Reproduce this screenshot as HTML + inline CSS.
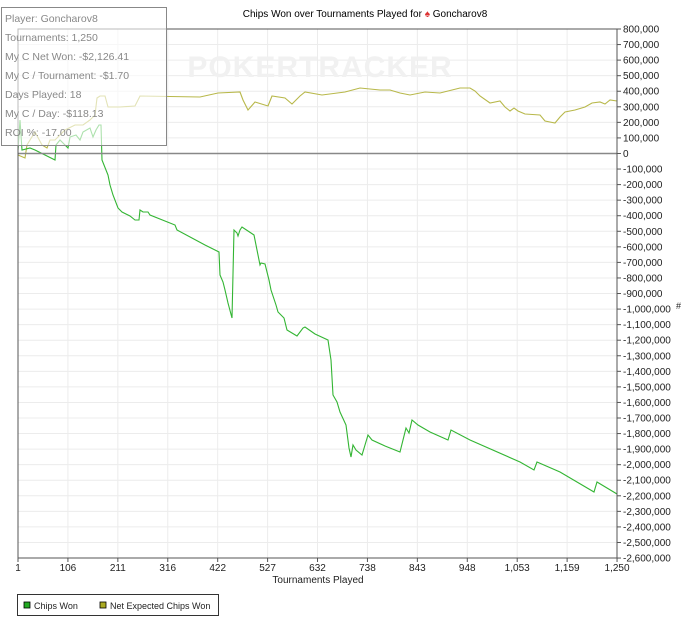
<!DOCTYPE html>
<html><head><meta charset="utf-8"><style>
html,body{margin:0;padding:0;background:#fff;width:700px;height:638px;overflow:hidden}
svg text{font-family:"Liberation Sans",sans-serif}
</style></head><body>
<svg width="700" height="638" viewBox="0 0 700 638" xmlns="http://www.w3.org/2000/svg">
<rect width="700" height="638" fill="#fff"/>
<text x="365" y="17" font-size="10" text-anchor="middle" fill="#000">Chips Won over Tournaments Played for <tspan fill="#d33">♠</tspan> Goncharov8</text>
<g stroke="#ececec" stroke-width="1" id="grid"></g>
<text x="320" y="77" font-size="30" font-weight="bold" fill="#f1f1f1" text-anchor="middle" letter-spacing="1">POKERTRACKER</text>
<g id="lines" fill="none" stroke-width="1.1"></g>
<line x1="18" y1="153.5" x2="617" y2="153.5" stroke="#888" stroke-width="1.5"/>
<rect x="18" y="29" width="599" height="529" fill="none" stroke="#555" stroke-width="1"/>
<g id="axis" font-size="10" fill="#222"></g>
<text x="318" y="583" font-size="10" text-anchor="middle" fill="#222">Tournaments Played</text>
<text x="676" y="309" font-size="9" fill="#222">#</text>
<rect x="17.5" y="594.5" width="201" height="21" fill="#fff" stroke="#333"/>
<rect x="24" y="602" width="6" height="6" fill="#2a2" stroke="#000" stroke-width="0.8"/>
<text x="34" y="609" font-size="9" fill="#222">Chips Won</text>
<rect x="100" y="602" width="6" height="6" fill="#aa2" stroke="#000" stroke-width="0.8"/>
<text x="110" y="609" font-size="9" fill="#222">Net Expected Chips Won</text>
<rect x="1.5" y="7.5" width="165" height="138" fill="rgba(255,255,255,0.6)" stroke="#888"/>
<g font-size="10.5" fill="#888">
<text x="5" y="22">Player: Goncharov8</text>
<text x="5" y="41">Tournaments: 1,250</text>
<text x="5" y="60">My C Net Won: -$2,126.41</text>
<text x="5" y="79">My C / Tournament: -$1.70</text>
<text x="5" y="98">Days Played: 18</text>
<text x="5" y="117">My C / Day: -$118.13</text>
<text x="5" y="136">ROI %: -17.00</text>
</g>
</svg>
<script>
var ns="http://www.w3.org/2000/svg";
function el(p,t,a,txt){var e=document.createElementNS(ns,t);for(var k in a)e.setAttribute(k,a[k]);if(txt)e.textContent=txt;p.appendChild(e);return e;}
var g=document.getElementById('grid'),ax=document.getElementById('axis'),ln=document.getElementById('lines');
var xl=["1","106","211","316","422","527","632","738","843","948","1,053","1,159","1,250"];
for(var i=0;i<13;i++){var x=18+i*49.92;el(g,'line',{x1:x,y1:29,x2:x,y2:558});el(ax,'line',{x1:x,y1:558,x2:x,y2:562,stroke:'#555'});
el(ax,'text',{x:x,y:571,'text-anchor':'middle'},xl[i]);}
for(var j=0;j<=34;j++){var y=29+j*15.56;el(g,'line',{x1:18,y1:y,x2:617,y2:y});el(ax,'line',{x1:617,y1:y,x2:621,y2:y,stroke:'#555'});
var v=800000-j*100000;var s=Math.abs(v).toLocaleString('en-US');el(ax,'text',{x:623,y:y+3.5},(v<0?'-':'')+s);}
var G=[[18,150],[20,120],[22,150],[30,148],[35,150],[45,155],[55,160],[56,145],[60,140],[65,145],[68,148],[70,137],[76,135],[80,140],[83,132],[90,128],[93,137],[96,130],[99,125],[101,125],[102,160],[108,175],[110,185],[113,195],[118,208],[122,212],[130,216],[135,220],[139,220],[140,210],[143,212],[148,212],[150,215],[175,225],[177,230],[205,245],[219,252],[220,275],[223,282],[225,290],[228,303],[232,318],[234,230],[237,233],[238,236],[240,230],[242,227],[254,235],[257,250],[260,265],[261,263],[265,264],[269,280],[271,290],[276,305],[278,312],[284,318],[287,330],[297,336],[303,328],[305,327],[315,334],[328,340],[331,360],[333,395],[337,402],[340,412],[346,425],[349,448],[351,457],[353,445],[356,450],[362,455],[368,435],[372,440],[385,446],[400,452],[403,440],[406,428],[409,433],[412,420],[418,425],[430,432],[448,440],[451,430],[470,440],[520,462],[534,470],[537,462],[560,472],[594,492],[597,482],[617,494]];
var Y=[[18,155],[25,158],[27,145],[30,140],[35,132],[42,145],[47,148],[50,140],[55,140],[65,130],[75,125],[83,125],[90,120],[95,115],[97,98],[100,96],[105,96],[108,107],[120,107],[135,106],[140,96],[200,97],[218,93],[240,92],[243,100],[248,110],[255,102],[268,106],[272,96],[285,98],[292,104],[300,96],[305,92],[322,95],[345,92],[360,88],[380,90],[390,90],[400,93],[410,95],[425,92],[440,93],[460,88],[470,88],[475,91],[480,96],[490,103],[500,101],[505,107],[510,111],[514,108],[518,111],[525,114],[540,115],[545,121],[555,123],[560,117],[565,112],[575,110],[585,107],[592,103],[600,102],[605,104],[610,100],[617,101]];
function pts(a){return a.map(function(p){return p.join(',')}).join(' ');}
el(ln,'polyline',{points:pts(Y),stroke:'#b8b84a'});
el(ln,'polyline',{points:pts(G),stroke:'#33b533'});
</script>
</body></html>
